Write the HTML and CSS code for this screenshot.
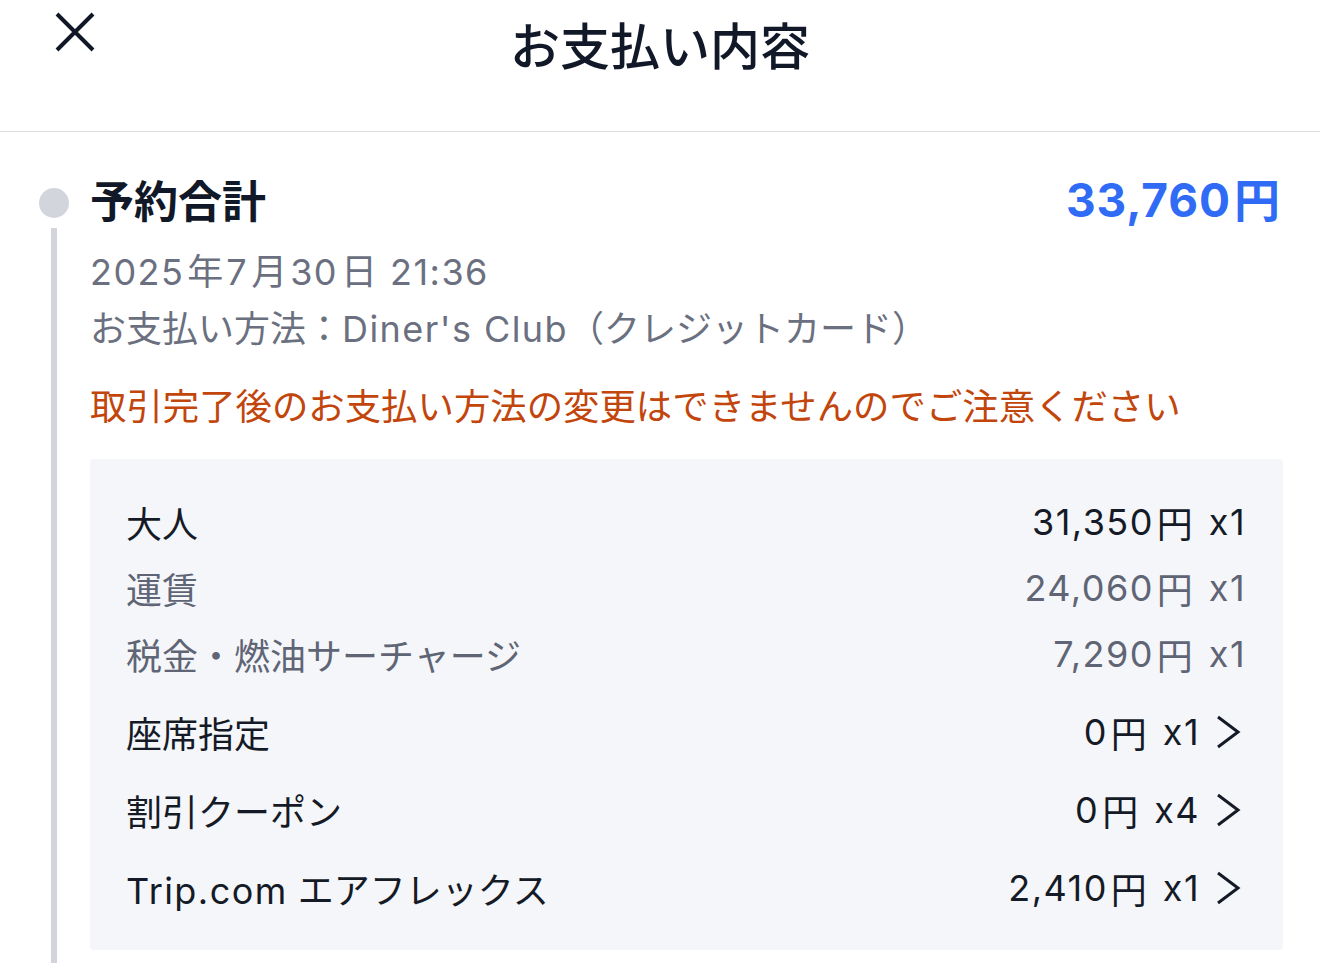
FILE: index.html
```html
<!DOCTYPE html>
<html lang="ja">
<head>
<meta charset="utf-8">
<title>お支払い内容</title>
<link rel="stylesheet" href="styles.css">
</head>
<body>
<header class="topbar">
  <div class="topbar-left">
    <button class="close-btn" aria-label="閉じる">
      <svg width="40" height="40" viewBox="0 0 40 40"><path d="M2 2 L38 38 M38 2 L2 38" stroke="#101828" stroke-width="4" fill="none"/></svg>
    </button>
  </div>
  <h1 class="title">お支払い内容</h1>
  <div class="topbar-right"></div>
</header>

<main class="timeline">
  <div class="rail">
    <span class="dot"></span>
    <span class="line"></span>
  </div>
  <section class="content">
    <div class="summary-head">
      <h2 class="summary-title">予約合計</h2>
      <div class="total"><span class="num">33,760</span><span class="yen">円</span></div>
    </div>
    <p class="meta date"><span class="num">2025</span><span class="k">年</span><span class="num">7</span><span class="k">月</span><span class="num">30</span><span class="k">日</span> <span class="num">21:36</span></p>
    <p class="meta">お支払い方法：<span class="num">Diner's Club</span>（クレジットカード）</p>
    <p class="notice">取引完了後のお支払い方法の変更はできませんのでご注意ください</p>

    <div class="breakdown">
      <div class="group">
        <div class="row main"><span class="label">大人</span><span class="value"><span class="num">31,350</span><span class="yen">円</span><span class="qty">x1</span></span></div>
        <div class="row sub"><span class="label">運賃</span><span class="value"><span class="num">24,060</span><span class="yen">円</span><span class="qty">x1</span></span></div>
        <div class="row sub"><span class="label">税金・燃油サーチャージ</span><span class="value"><span class="num">7,290</span><span class="yen">円</span><span class="qty">x1</span></span></div>
      </div>
      <div class="row main link"><span class="label">座席指定</span><span class="value"><span class="num">0</span><span class="yen">円</span><span class="qty">x1</span><svg class="chev" width="30" height="34" viewBox="0 0 30 34"><path d="M2 2 L22 17 L2 32" stroke="#151b26" stroke-width="3" fill="none"/></svg></span></div>
      <div class="row main link"><span class="label">割引クーポン</span><span class="value"><span class="num">0</span><span class="yen">円</span><span class="qty">x4</span><svg class="chev" width="30" height="34" viewBox="0 0 30 34"><path d="M2 2 L22 17 L2 32" stroke="#151b26" stroke-width="3" fill="none"/></svg></span></div>
      <div class="row main link"><span class="label"><span class="num">Trip.com</span> エアフレックス</span><span class="value"><span class="num">2,410</span><span class="yen">円</span><span class="qty">x1</span><svg class="chev" width="30" height="34" viewBox="0 0 30 34"><path d="M2 2 L22 17 L2 32" stroke="#151b26" stroke-width="3" fill="none"/></svg></span></div>
    </div>
  </section>
</main>
</body>
</html>
```

FILE: styles.css
```css
* { box-sizing: border-box; }
html, body { margin: 0; padding: 0; background: #ffffff; }
body {
  font-family: "Inter", "Noto Sans CJK JP", sans-serif;
  color: #151b26;
  width: 1320px;
  overflow: hidden;
}
p, h1, h2 { margin: 0; }

.num { letter-spacing: 0.04em; }
.yen { margin-left: 3px; }
.qty { margin-left: 16px; letter-spacing: 0.04em; }
.k { margin: 0 3px; }

.topbar {
  height: 132px;
  border-bottom: 1px solid #dedfe2;
  display: grid;
  grid-template-columns: 1fr auto 1fr;
  align-items: start;
}
.topbar-left { padding: 12px 0 0 55px; }
.close-btn {
  border: 0; background: none; padding: 0; margin: 0;
  width: 40px; height: 40px; display: block;
}
.close-btn svg { display: block; }
.title {
  font-size: 50px;
  line-height: 56px;
  font-weight: 500;
  color: #111827;
  padding-top: 19px;
}

.timeline {
  display: grid;
  grid-template-columns: 30px 1fr;
  column-gap: 21px;
  padding: 37px 37px 0 39px;
}
.rail {
  display: flex;
  flex-direction: column;
  align-items: center;
}
.dot {
  width: 30px; height: 30px;
  border-radius: 50%;
  background: #d3d5dc;
  margin-top: 19px;
}
.line {
  width: 6px;
  flex: 1;
  margin-top: 10px;
  background: #d3d5dc;
}

.content { padding-bottom: 40px; }
.summary-head {
  display: flex;
  justify-content: space-between;
  align-items: center;
  height: 60px;
}
.summary-title {
  font-size: 44px;
  font-weight: 700;
  color: #111827;
}
.total {
  font-size: 46px;
  font-weight: 700;
  color: #2f6bf5;
  margin-right: 3px;
  margin-bottom: 4px;
}
.total .num { letter-spacing: 0.02em; }
.meta {
  font-size: 36px;
  line-height: 57px;
  color: #6b7080;
}
.date { margin-top: 15px; }
.notice {
  font-size: 36.4px;
  line-height: 56px;
  color: #c2450c;
  margin-top: 21px;
}

.breakdown {
  margin-top: 24px;
  background: #f5f6fa;
  border-radius: 4px;
  padding: 40px 37px 39px 36px;
  display: flex;
  flex-direction: column;
  gap: 32px;
}
.group {
  display: flex;
  flex-direction: column;
  gap: 20px;
}
.row {
  display: flex;
  justify-content: space-between;
  align-items: center;
  height: 46px;
  font-size: 36px;
}
.row.main { color: #151b26; }
.row.sub { color: #5f6575; }
.value {
  display: flex;
  align-items: center;
  white-space: pre;
}
.chev { display: block; margin-left: 16px; }
```
